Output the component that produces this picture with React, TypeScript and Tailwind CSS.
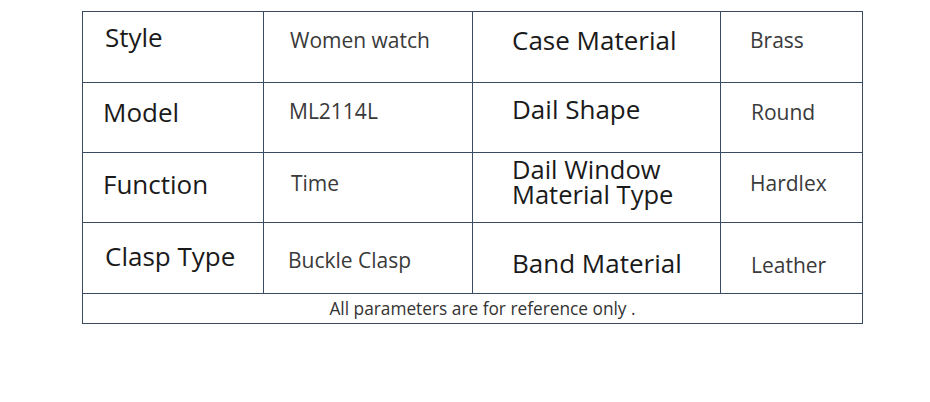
import React from "react";

const font = { fontFamily: '"Open Sans", "Noto Sans", sans-serif' };

export default function App() {
  return (
    <div className="w-[930px] h-[402px] bg-white" style={font}>
      <div className="pt-[11px] pl-[82px]">
        <div className="w-[781px] border-l border-t border-[#3b4a63]">
          <div className="grid grid-cols-[181px_209px_248px_142px] grid-rows-[71px_70px_70px_71px]">
            {/* Row 1 */}
            <div className="border-r border-b border-[#3b4a63] flex items-center pl-[22px] pb-[20px] text-[26px] text-[#1a1a1a]">Style</div>
            <div className="border-r border-b border-[#3b4a63] flex items-center pl-[26px] pb-[13px] text-[21px] text-[#3a3a3a]">Women watch</div>
            <div className="border-r border-b border-[#3b4a63] flex items-center pl-[39px] pb-[13px] text-[26px] text-[#1a1a1a]">Case Material</div>
            <div className="border-r border-b border-[#3b4a63] flex items-center pl-[29px] pb-[12px] text-[21px] text-[#3a3a3a]">Brass</div>
            {/* Row 2 */}
            <div className="border-r border-b border-[#3b4a63] flex items-center pl-[20px] pb-[10px] text-[26px] text-[#1a1a1a]">Model</div>
            <div className="border-r border-b border-[#3b4a63] flex items-center pl-[25px] pb-[12px] text-[21px] text-[#3a3a3a]">ML2114L</div>
            <div className="border-r border-b border-[#3b4a63] flex items-center pl-[39px] pb-[16px] text-[26px] text-[#1a1a1a]">Dail Shape</div>
            <div className="border-r border-b border-[#3b4a63] flex items-center pl-[30px] pb-[10px] text-[21px] text-[#3a3a3a]">Round</div>
            {/* Row 3 */}
            <div className="border-r border-b border-[#3b4a63] flex items-center pl-[20px] pb-[7px] text-[26px] text-[#1a1a1a]">Function</div>
            <div className="border-r border-b border-[#3b4a63] flex items-center pl-[27px] pb-[7px] text-[21px] text-[#3a3a3a]">Time</div>
            <div className="border-r border-b border-[#3b4a63] flex items-center pl-[39px] pb-[12px] text-[25.5px] leading-[25px] text-[#1a1a1a]">
              <div>Dail Window<br />Material Type</div>
            </div>
            <div className="border-r border-b border-[#3b4a63] flex items-center pl-[29px] pb-[7px] text-[21px] text-[#3a3a3a]">Hardlex</div>
            {/* Row 4 */}
            <div className="border-r border-b border-[#3b4a63] flex items-center pl-[22px] pb-[3px] text-[26px] text-[#1a1a1a]">Clasp Type</div>
            <div className="border-r border-b border-[#3b4a63] flex items-center pl-[24px] pt-[6px] text-[21px] text-[#3a3a3a]">Buckle Clasp</div>
            <div className="border-r border-b border-[#3b4a63] flex items-center pl-[39px] pt-[10px] text-[26px] text-[#1a1a1a]">Band Material</div>
            <div className="border-r border-b border-[#3b4a63] flex items-center pl-[30px] pt-[15px] text-[21px] text-[#3a3a3a]">Leather</div>
          </div>
          <div className="h-[30px] border-r border-b border-[#3b4a63] flex items-center justify-center pl-[20px] text-[17.3px] text-[#333]">
            All parameters are for reference only .
          </div>
        </div>
      </div>
    </div>
  );
}
